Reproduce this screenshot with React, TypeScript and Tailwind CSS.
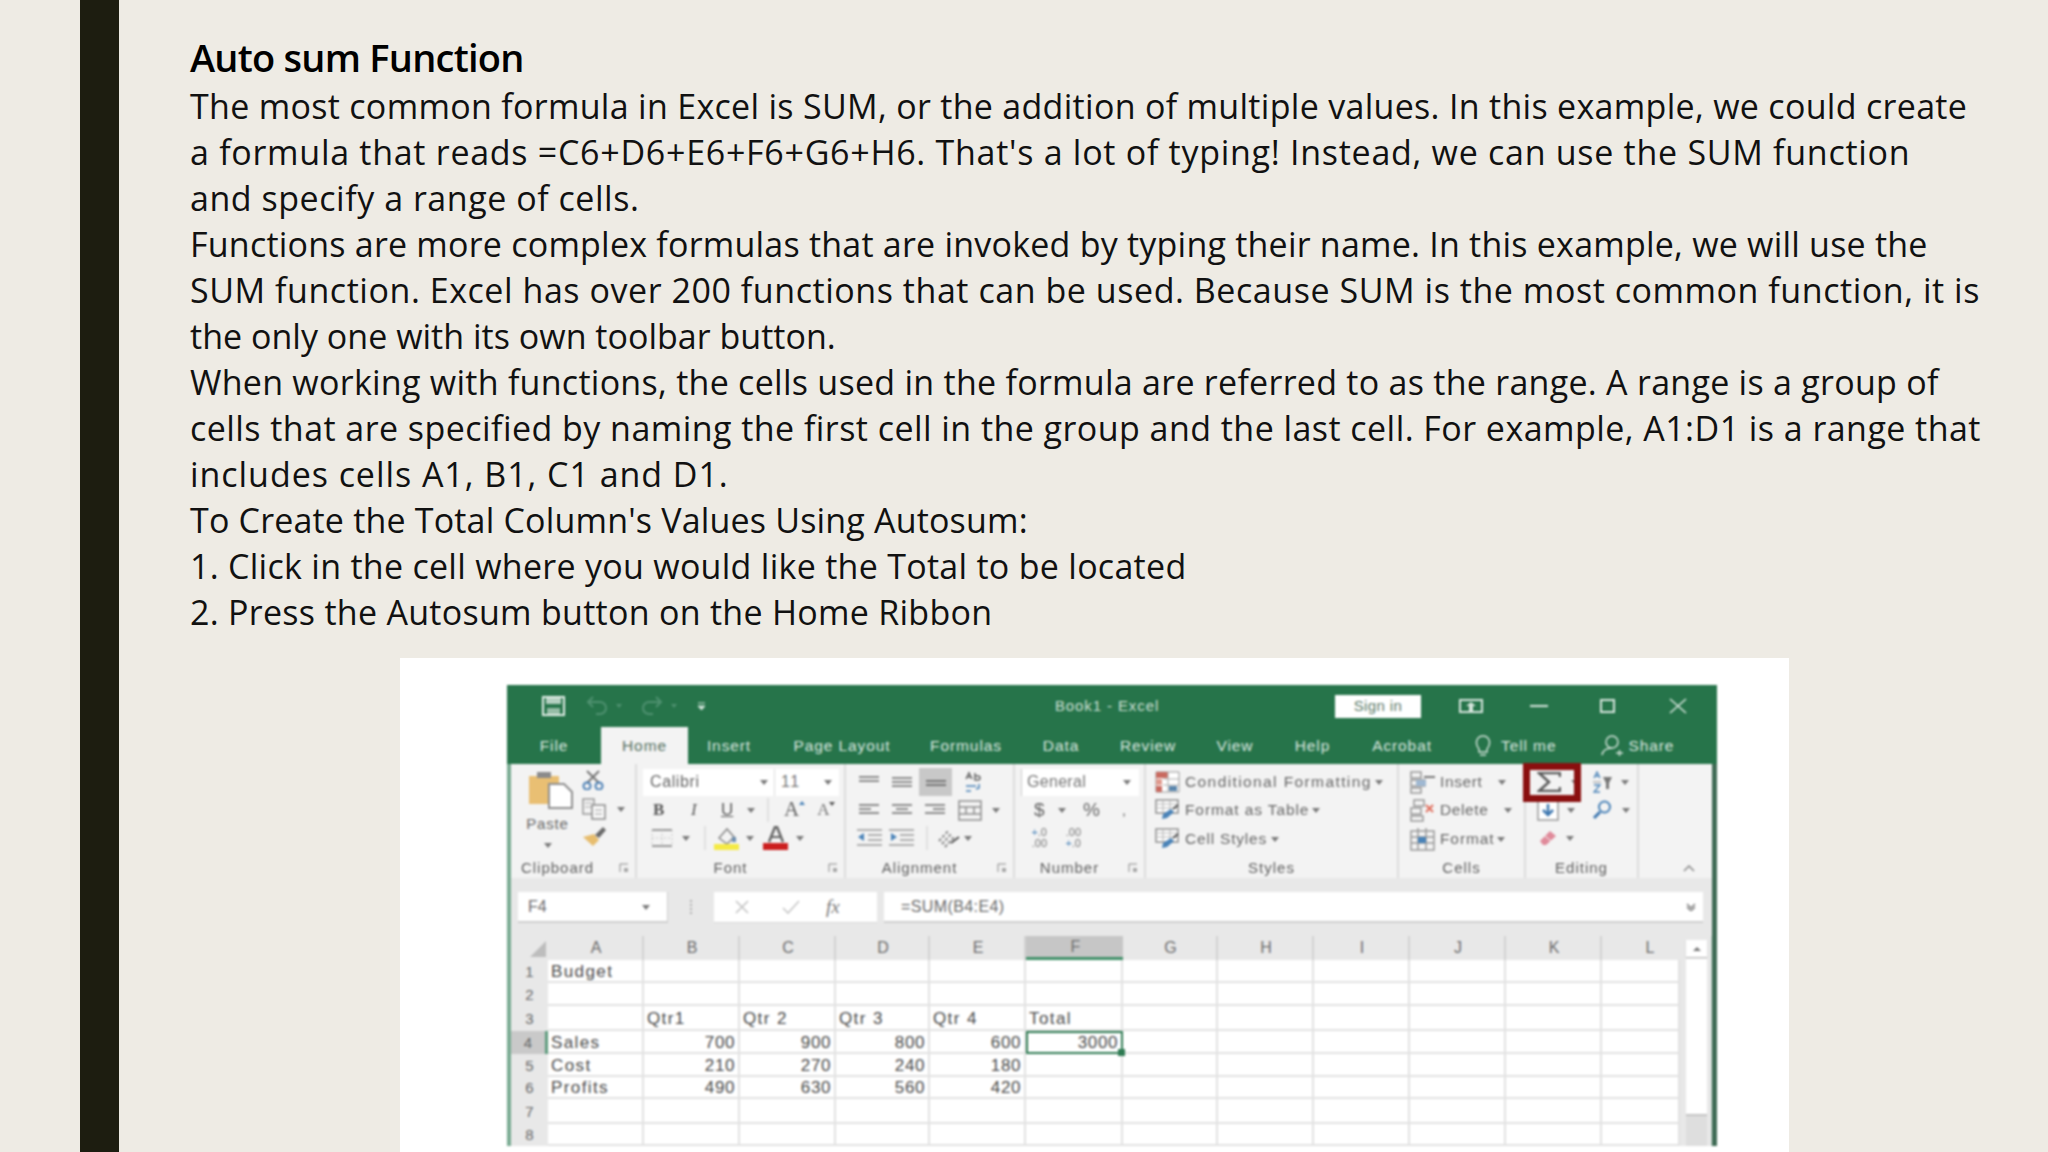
import React from "react";

const bodyLines = [
  { text: "The most common formula in Excel is SUM, or the addition of multiple values. In this example, we could create", cls: "tracking-[0.3px]" },
  { text: "a formula that reads =C6+D6+E6+F6+G6+H6. That's a lot of typing! Instead, we can use the SUM function", cls: "tracking-[0.72px]" },
  { text: "and specify a range of cells.", cls: "tracking-[0.54px]" },
  { text: "Functions are more complex formulas that are invoked by typing their name. In this example, we will use the", cls: "tracking-[0.22px]" },
  { text: "SUM function. Excel has over 200 functions that can be used. Because SUM is the most common function, it is", cls: "tracking-[0.55px]" },
  { text: "the only one with its own toolbar button.", cls: "tracking-[0.02px]" },
  { text: "When working with functions, the cells used in the formula are referred to as the range. A range is a group of", cls: "tracking-[0.27px]" },
  { text: "cells that are specified by naming the first cell in the group and the last cell. For example, A1:D1 is a range that", cls: "tracking-[0.45px]" },
  { text: "includes cells A1, B1, C1 and D1.", cls: "tracking-[0.95px]" },
  { text: "To Create the Total Column's Values Using Autosum:", cls: "tracking-[0.18px]" },
  { text: "1. Click in the cell where you would like the Total to be located", cls: "tracking-[0.28px]" },
  { text: "2. Press the Autosum button on the Home Ribbon", cls: "tracking-[0.28px]" },
];

const tabs = [
  { label: "File", cls: "w-[80px] ml-[7px]" },
  { label: "Insert", cls: "w-[82px] ml-[94px]" },
  { label: "Page Layout", cls: "w-[144px]" },
  { label: "Formulas", cls: "w-[104px]" },
  { label: "Data", cls: "w-[86px]" },
  { label: "Review", cls: "w-[88px]" },
  { label: "View", cls: "w-[86px]" },
  { label: "Help", cls: "w-[69px]" },
  { label: "Acrobat", cls: "w-[110px]" },
];

const columns = ["A", "B", "C", "D", "E", "F", "G", "H", "I", "J", "K", "L"];

const rows: string[][] = [
  ["Budget"],
  [],
  ["", "Qtr1", "Qtr 2", "Qtr 3", "Qtr 4", "Total"],
  ["Sales", "700", "900", "800", "600", "3000"],
  ["Cost", "210", "270", "240", "180"],
  ["Profits", "490", "630", "560", "420"],
  [],
  [],
];

function Caret({ className = "" }: { className?: string }) {
  return (
    <svg width="8" height="5" viewBox="0 0 8 5" className={className}>
      <path d="M0 0h8L4 5z" fill="#7a7a7a" />
    </svg>
  );
}

function Lines({ d, w = 22, h = 14, color = "#8c8c8c" }: { d: string; w?: number; h?: number; color?: string }) {
  return (
    <svg width={w} height={h} viewBox={`0 0 ${w} ${h}`}>
      <path d={d} stroke={color} strokeWidth="2" fill="none" />
    </svg>
  );
}

function Launcher({ className = "" }: { className?: string }) {
  return (
    <svg width="10" height="10" viewBox="0 0 10 10" className={className}>
      <path d="M1 9V1h8" stroke="#8a8a8a" fill="none" />
      <path d="M5 5h4v4H5z" fill="#a8a8a8" />
    </svg>
  );
}

function Group({
  label,
  width,
  launcher,
  labelCls = "",
  children,
}: {
  label: string;
  width: string;
  launcher?: boolean;
  labelCls?: string;
  children: React.ReactNode;
}) {
  return (
    <div className={`flex h-full flex-col border-r-2 border-[#dcdcdc] ${width}`}>
      <div className="flex h-[94px] flex-col pt-[3px]">{children}</div>
      <div className={`flex h-[20px] items-center justify-center text-[15px] tracking-[1px] text-[#5f5f5f] ${labelCls}`}>
        <span>{label}</span>
      </div>
      {launcher && (
        <div className="relative">
          <Launcher className="absolute bottom-[5px] right-[6px]" />
        </div>
      )}
    </div>
  );
}

function Row({ children, className = "" }: { children: React.ReactNode; className?: string }) {
  return <div className={`flex h-[28px] shrink-0 items-center ${className}`}>{children}</div>;
}

function TableIcon({ accent = "#4a83b8" }: { accent?: string }) {
  return (
    <svg width="25" height="24" viewBox="0 0 25 24">
      <path d="M1 2h22v13H1z" fill="#fff" stroke="#8f8f8f" strokeWidth="1.5" />
      <path d="M1 6h22M1 10h22M8 2v13M15 2v13" stroke="#b5b5b5" />
      <path d="M8 16l8-5 3 3-7 6-5 1z" fill={accent} />
      <path d="M18 11l5-4" stroke="#555" strokeWidth="2" />
    </svg>
  );
}

function RibbonTop() {
  return (
    <>
      <div className="flex h-[42px] shrink-0 items-center bg-[#26744a] text-white">
        <svg width="23" height="20" viewBox="0 0 23 20" className="ml-[35px]">
          <path d="M1 1h21v18H1z" fill="none" stroke="#e4efe9" strokeWidth="2" />
          <path d="M4 2h15v6H4z" fill="#e4efe9" opacity="0.75" />
          <path d="M5 12h13v7H5z" fill="#dfece5" opacity="0.6" />
        </svg>
        <svg width="24" height="20" viewBox="0 0 24 20" className="ml-[21px]">
          <path d="M7 1L2 6l5 5M2 6h12a6 6 0 0 1 0 12h-4" fill="none" stroke="#4f9170" strokeWidth="2" />
        </svg>
        <svg width="6" height="4" viewBox="0 0 6 4" className="ml-[6px]">
          <path d="M0 0h6L3 4z" fill="#4f9170" />
        </svg>
        <svg width="24" height="20" viewBox="0 0 24 20" className="ml-[17px]">
          <path d="M17 1l5 5-5 5M22 6H10a6 6 0 0 0 0 12h4" fill="none" stroke="#4f9170" strokeWidth="2" />
        </svg>
        <svg width="6" height="4" viewBox="0 0 6 4" className="ml-[8px]">
          <path d="M0 0h6L3 4z" fill="#4f9170" />
        </svg>
        <svg width="9" height="9" viewBox="0 0 9 9" className="ml-[20px]">
          <path d="M1 1h7M1 4h7l-3.500 4z" stroke="#cfe2d8" fill="#cfe2d8" />
        </svg>
        <span className="ml-[343px] w-[116px] whitespace-nowrap text-center text-[15px] tracking-[0.9px] text-[#cfe0d6]">Book1 - Excel</span>
        <span className="ml-[170px] flex h-[23px] w-[86px] items-center justify-center bg-white text-[15px] tracking-[0.4px] text-[#5b7a69]">
          Sign in
        </span>
        <svg width="24" height="14" viewBox="0 0 24 14" className="ml-[38px]">
          <path d="M1 1h22v12H1z" fill="none" stroke="#d7e6dd" strokeWidth="2" />
          <path d="M12 3l5 4h-3v5h-4V7H7z" fill="#d7e6dd" />
        </svg>
        <svg width="18" height="2" viewBox="0 0 18 2" className="ml-[47px]">
          <path d="M0 1h18" stroke="#d7e6dd" strokeWidth="2" />
        </svg>
        <svg width="15" height="14" viewBox="0 0 15 14" className="ml-[52px]">
          <path d="M1 1h13v12H1z" fill="none" stroke="#d7e6dd" strokeWidth="2" />
        </svg>
        <svg width="18" height="16" viewBox="0 0 18 16" className="ml-[54px]">
          <path d="M1 1l16 14M17 1L1 15" stroke="#d7e6dd" strokeWidth="1.6" />
        </svg>
      </div>
      <div className="relative flex h-[37px] shrink-0 items-center bg-[#26744a] text-[15.500px] tracking-[0.9px] text-[#dbe8e0]">
        {tabs.map((tab) => (
          <span key={tab.label} className={`text-center ${tab.cls}`}>
            {tab.label}
          </span>
        ))}
        <span className="absolute bottom-0 left-[94px] flex h-[37px] w-[87px] items-center justify-center bg-[#f3f3f3] text-[#54705f]">
          Home
        </span>
        <svg width="16" height="24" viewBox="0 0 16 24" className="ml-[18px]">
          <path d="M4 15c-5-6-2-13 4-13s9 7 4 13v3H4zM5 21h6" fill="none" stroke="#cfe0d6" strokeWidth="1.5" />
        </svg>
        <span className="ml-[10px]">Tell me</span>
        <svg width="24" height="24" viewBox="0 0 24 24" className="ml-[44px]">
          <circle cx="12" cy="8" r="6" fill="none" stroke="#cfe0d6" strokeWidth="1.5" />
          <path d="M2 21c1-5 5-7 10-7M16 19h7M19.500 16v6" fill="none" stroke="#cfe0d6" strokeWidth="1.5" />
        </svg>
        <span className="ml-[4px]">Share</span>
      </div>
    </>
  );
}

function Ribbon() {
  return (
    <div className="flex h-[114px] shrink-0 items-stretch bg-[#f3f3f3]">
      <Group label="Clipboard" width="w-[126px]" launcher labelCls="pr-[31px]">
        <div className="flex h-full">
          <div className="ml-[9px] flex w-[55px] flex-col items-center">
            <svg width="46" height="40" viewBox="0 0 46 40" className="ml-[6px] mt-[3px]">
              <path d="M1 6h30v28H1z" fill="#e9bf73" />
              <path d="M9 2h14v6H9z" fill="#8b8b8b" />
              <path d="M21 14h15l8 8v16H21z" fill="#fff" stroke="#8f8f8f" strokeWidth="2" />
            </svg>
            <span className="mt-[3px] text-[15px] tracking-[0.8px] text-[#666]">Paste</span>
            <Caret className="mt-[7px]" />
          </div>
          <div className="ml-[7px] flex flex-col">
            <svg width="22" height="20" viewBox="0 0 22 20" className="mt-[3px]">
              <path d="M5 1l12 12M17 1L5 13" stroke="#777" strokeWidth="2" />
              <circle cx="5" cy="16" r="3.500" fill="none" stroke="#4a7fb5" strokeWidth="2" />
              <circle cx="17" cy="16" r="3.500" fill="none" stroke="#4a7fb5" strokeWidth="2" />
            </svg>
            <div className="mt-[8px] flex items-center">
              <svg width="24" height="22" viewBox="0 0 24 22">
                <path d="M1 1h11v15H1z" fill="none" stroke="#999" strokeWidth="1.500" />
                <path d="M3 5h7M3 9h7" stroke="#aaa" />
                <path d="M10 7h13v14H10z" fill="#fafafa" stroke="#8c8c8c" strokeWidth="1.500" />
                <path d="M13 12h7M13 16h7" stroke="#999" />
              </svg>
              <Caret className="ml-[11px]" />
            </div>
            <svg width="26" height="21" viewBox="0 0 26 21" className="mt-[6px]">
              <path d="M1 11l11-3 5 6-6 6z" fill="#e7bd6e" />
              <path d="M13 9l8-8 3 3-7 8z" fill="#6a6a6a" />
            </svg>
          </div>
        </div>
      </Group>

      <Group label="Font" width="w-[209px]" launcher labelCls="pr-[20px]">
        <Row className="mt-[1px]">
          <div className="ml-[6px] flex h-[27px] w-[132px] items-center justify-between border-r border-[#ddd] bg-white pl-[7px] pr-[6px] text-[16px] tracking-[0.6px] text-[#666]">
            <span>Calibri</span>
            <Caret />
          </div>
          <div className="flex h-[27px] w-[64px] items-center justify-between bg-white pl-[6px] pr-[7px] text-[16px] tracking-[1.500px] text-[#777]">
            <span>11</span>
            <Caret />
          </div>
        </Row>
        <Row className="text-[17px] text-[#5a5a5a]">
          <b className="ml-[16px] w-[12px] font-['Liberation_Serif']">B</b>
          <i className="ml-[26px] w-[8px] font-['Liberation_Serif']">I</i>
          <span className="ml-[22px] w-[13px] underline">U</span>
          <Caret className="ml-[13px]" />
          <span className="ml-[12px] h-[24px] w-[2px] bg-[#e0e0e0]" />
          <span className="ml-[15px] text-[21px] font-['Liberation_Serif'] text-[#666]">A</span>
          <svg width="6" height="4" viewBox="0 0 6 4" className="mb-[14px]">
            <path d="M0 4l3-4 3 4z" fill="#4a83b8" />
          </svg>
          <span className="ml-[12px] text-[17px] font-['Liberation_Serif'] text-[#777]">A</span>
          <svg width="6" height="4" viewBox="0 0 6 4" className="mb-[12px]">
            <path d="M0 0h6L3 4z" fill="#555" />
          </svg>
        </Row>
        <Row>
          <svg width="22" height="20" viewBox="0 0 22 20" className="ml-[14px]">
            <path d="M1 2h20M1 18h20" stroke="#9a9a9a" strokeWidth="2" />
            <path d="M1 10h20M1 2v16M11 2v16M21 2v16" stroke="#c8c8c8" strokeDasharray="2 2" />
          </svg>
          <Caret className="ml-[9px]" />
          <span className="ml-[14px] h-[24px] w-[2px] bg-[#e0e0e0]" />
          <svg width="25" height="24" viewBox="0 0 25 24" className="ml-[8px]">
            <path d="M5 12l8-9 7 8-7 7z" fill="none" stroke="#8a8a8a" strokeWidth="1.500" />
            <path d="M18 11h4v5h-4z" fill="#6e8fb0" />
            <path d="M0 18h25v6H0z" fill="#f5ea45" />
          </svg>
          <Caret className="ml-[7px]" />
          <svg width="25" height="24" viewBox="0 0 25 24" className="ml-[9px]">
            <path d="M6 16L12 1h2l6 15" fill="none" stroke="#666" strokeWidth="2.500" />
            <path d="M8 11h10" stroke="#666" strokeWidth="2" />
            <path d="M0 17h25v7H0z" fill="#cc1f1f" />
          </svg>
          <Caret className="ml-[8px]" />
        </Row>
      </Group>

      <Group label="Alignment" width="w-[169px]" launcher labelCls="pr-[20px]">
        <Row className="mt-[1px]">
          <span className="ml-[13px]"><Lines d="M0 2h20M0 6h20" /></span>
          <span className="ml-[11px]"><Lines d="M0 3h20M0 7h20M0 11h20" /></span>
          <span className="ml-[5px] flex h-[28px] w-[33px] items-center justify-center bg-[#c8c8c8]">
            <Lines w={20} h={10} d="M0 4h20M0 8h20" color="#777" />
          </span>
          <svg width="18" height="22" viewBox="0 0 18 22" className="ml-[13px]">
            <path d="M1 8l3-6 3 6M2 6h4M10 2v7h3a2 2 0 0 0 0-4h-3" fill="none" stroke="#666" strokeWidth="1.500" />
            <path d="M1 15h10M14 13v4l-3 1M1 20h5" fill="none" stroke="#4a83b8" strokeWidth="1.500" />
          </svg>
        </Row>
        <Row>
          <span className="ml-[13px]"><Lines d="M0 2h20M0 6h12M0 10h20" /></span>
          <span className="ml-[11px]"><Lines d="M0 2h20M4 6h12M0 10h20" /></span>
          <span className="ml-[11px]"><Lines d="M0 2h20M8 6h12M0 10h20" /></span>
          <svg width="24" height="21" viewBox="0 0 24 21" className="ml-[11px]">
            <path d="M1 1h22v19H1zM1 7h22M1 14h22M8 7v7M16 7v7" fill="none" stroke="#8f8f8f" strokeWidth="1.500" />
          </svg>
          <Caret className="ml-[10px]" />
        </Row>
        <Row>
          <svg width="25" height="18" viewBox="0 0 25 18" className="ml-[11px]">
            <path d="M0 1h25M11 6h14M11 11h14M0 16h25" stroke="#9a9a9a" strokeWidth="1.600" />
            <path d="M1 8l6-4v8z" fill="#4a83b8" />
          </svg>
          <svg width="25" height="18" viewBox="0 0 25 18" className="ml-[7px]">
            <path d="M0 1h25M11 6h14M11 11h14M0 16h25" stroke="#9a9a9a" strokeWidth="1.600" />
            <path d="M8 8L2 4v8z" fill="#4a83b8" />
          </svg>
          <span className="ml-[12px] h-[24px] w-[2px] bg-[#e0e0e0]" />
          <svg width="24" height="22" viewBox="0 0 24 22" className="ml-[9px]">
            <path d="M2 14L12 3M5 17L15 6M8 20l10-11" stroke="#8a8a8a" strokeWidth="2" strokeDasharray="3 2" />
            <path d="M14 16l8-6" stroke="#555" strokeWidth="2" />
          </svg>
          <Caret className="ml-[3px]" />
        </Row>
      </Group>

      <Group label="Number" width="w-[131px]" launcher labelCls="pr-[20px]">
        <Row className="mt-[1px]">
          <div className="ml-[6px] flex h-[27px] w-[118px] items-center justify-between border-l border-[#ccc] bg-white pl-[5px] pr-[8px] text-[16px] tracking-[0.3px] text-[#777]">
            <span>General</span>
            <Caret />
          </div>
        </Row>
        <Row className="text-[19px] text-[#666]">
          <span className="ml-[19px] w-[14px]">$</span>
          <Caret className="ml-[10px]" />
          <span className="ml-[17px]">%</span>
          <span className="ml-[22px] text-[14px]">,</span>
        </Row>
        <Row className="text-[11px] leading-[11px] text-[#777]">
          <span className="ml-[10px] w-[22px] text-right">
            <span className="text-[#4a83b8]">+</span>.0
            <br />
            .00
          </span>
          <span className="ml-[12px] w-[22px] text-right">
            .00
            <br />
            <span className="text-[#4a83b8]">+</span>.0
          </span>
        </Row>
      </Group>

      <Group label="Styles" width="w-[253px]">
        <Row className="mt-[1px] text-[15.500px] tracking-[1.400px] text-[#666]">
          <svg width="25" height="22" viewBox="0 0 25 22" className="ml-[9px]">
            <path d="M1 1h23v20H1z" fill="#fff" stroke="#999" />
            <path d="M1 1h12v6H1z" fill="#c96a60" />
            <path d="M1 8h6v6H1z" fill="#e09a8e" />
            <path d="M1 15h6v6H1z" fill="#c96a60" />
            <path d="M8 8h16M8 14h16M13 1v20" stroke="#aaa" />
            <path d="M14 15h8v5h-8z" fill="#5a86ad" />
          </svg>
          <span className="ml-[5px]">Conditional Formatting</span>
          <Caret className="ml-[3px]" />
        </Row>
        <Row className="text-[15.500px] tracking-[0.9px] text-[#666]">
          <span className="ml-[9px] flex"><TableIcon /></span>
          <span className="ml-[5px]">Format as Table</span>
          <Caret className="ml-[3px]" />
        </Row>
        <Row className="mt-[1px] text-[15.500px] tracking-[0.8px] text-[#666]">
          <span className="ml-[9px] flex"><TableIcon /></span>
          <span className="ml-[5px]">Cell Styles</span>
          <Caret className="ml-[4px]" />
        </Row>
      </Group>

      <Group label="Cells" width="w-[127px]">
        <Row className="mt-[1px] text-[15.500px] tracking-[0.6px] text-[#666]">
          <svg width="25" height="23" viewBox="0 0 25 23" className="ml-[11px]">
            <path d="M1 1h10v6H1zM1 9h14v6H1zM1 17h10v5H1z" fill="none" stroke="#999" strokeWidth="1.500" />
            <path d="M6 9h10v6H6z" fill="#9fb8d2" />
            <path d="M14 6h11" stroke="#777" strokeWidth="2" />
          </svg>
          <span className="ml-[5px] w-[50px]">Insert</span>
          <Caret className="ml-[8px]" />
        </Row>
        <Row className="text-[15.500px] tracking-[0.6px] text-[#666]">
          <svg width="25" height="23" viewBox="0 0 25 23" className="ml-[11px]">
            <path d="M4 1h10v6H4zM1 9h10v6H1zM1 17h12v5H1z" fill="none" stroke="#999" strokeWidth="1.500" />
            <path d="M16 6l7 7M23 6l-7 7" stroke="#e0705f" strokeWidth="2" />
          </svg>
          <span className="ml-[5px] w-[50px]">Delete</span>
          <Caret className="ml-[14px]" />
        </Row>
        <Row className="mt-[1px] text-[15.500px] tracking-[0.9px] text-[#666]">
          <svg width="25" height="24" viewBox="0 0 25 24" className="ml-[11px]">
            <path d="M1 4h23v19H1zM1 10h23M1 16h23M8 1v22M16 1v22" fill="none" stroke="#999" strokeWidth="1.500" />
            <path d="M8 10h8v6H8z" fill="#4a83b8" />
          </svg>
          <span className="ml-[5px]">Format</span>
          <Caret className="ml-[2px]" />
        </Row>
      </Group>

      <Group label="Editing" width="w-[113px]">
        <Row className="relative mt-[1px]">
          <span className="absolute left-[-3px] top-[-5px] h-[39px] w-[58px] border-[7px] border-[#8a0f0f]" />
          <svg width="24" height="20" viewBox="0 0 24 20" className="ml-[11px]">
            <path d="M23 5V1H2l10 9L2 19h21v-4" fill="none" stroke="#5c5c5c" strokeWidth="2.500" />
          </svg>
          <Caret className="ml-[10px]" />
          <svg width="20" height="22" viewBox="0 0 20 22" className="ml-[14px]">
            <path d="M1 7l3-6 3 6M2 5h4" fill="none" stroke="#4a83b8" strokeWidth="1.300" />
            <path d="M0 11h8" stroke="#aaa" strokeWidth="1.300" />
            <path d="M1 14h6l-6 7h6" fill="none" stroke="#4a83b8" strokeWidth="1.300" />
            <path d="M10 6h9l-3 6v6h-3v-6z" fill="#777" />
          </svg>
          <Caret className="ml-[8px]" />
        </Row>
        <Row>
          <svg width="22" height="21" viewBox="0 0 22 21" className="ml-[11px]">
            <path d="M1 1h20v19H1z" fill="#fff" stroke="#999" strokeWidth="1.500" />
            <path d="M11 4v11M6 10l5 5 5-5" fill="none" stroke="#3f78b0" strokeWidth="2.500" />
          </svg>
          <Caret className="ml-[8px]" />
          <svg width="20" height="20" viewBox="0 0 20 20" className="ml-[17px]">
            <circle cx="12.500" cy="7" r="5.500" fill="none" stroke="#4a83b8" strokeWidth="2" />
            <path d="M8 12l-6 6" stroke="#3f78b0" strokeWidth="3" />
          </svg>
          <Caret className="ml-[10px]" />
        </Row>
        <Row>
          <svg width="18" height="16" viewBox="0 0 18 16" className="ml-[13px]">
            <path d="M1 11l10-10 6 5L7 15H4z" fill="#e08a9a" />
            <path d="M6 6l6 5" stroke="#f3f3f3" />
          </svg>
          <Caret className="ml-[9px]" />
        </Row>
      </Group>

      <div className="flex flex-1 flex-col items-end justify-end pb-[6px] pr-[17px]">
        <svg width="12" height="7" viewBox="0 0 12 7">
          <path d="M1 6l5-5 5 5" fill="none" stroke="#8a8a8a" strokeWidth="1.500" />
        </svg>
      </div>
    </div>
  );
}

function FormulaBar() {
  return (
    <div className="flex h-[58px] shrink-0 items-start bg-[#e8e8e8] pl-[7px] pr-[9px] pt-[14px] text-[16px] text-[#6a6a6a]">
      <div className="flex h-[31px] w-[150px] items-center justify-between border-b-2 border-r border-[#cfcfcf] bg-white pl-[10px] pr-[17px] pt-[1px]">
        <span>F4</span>
        <Caret />
      </div>
      <span className="ml-[22px] mt-[8px] h-[14px] w-[2px] border-l-2 border-dotted border-[#b0b0b0]" />
      <div className="ml-[22px] flex h-[31px] w-[163px] items-center border-b border-[#d8d8d8] bg-white">
        <svg width="16" height="16" viewBox="0 0 16 16" className="ml-[20px]">
          <path d="M2 2l12 12M14 2L2 14" stroke="#c4c4c4" strokeWidth="1.600" />
        </svg>
        <svg width="18" height="16" viewBox="0 0 18 16" className="ml-[32px]">
          <path d="M1 9l5 5L17 2" fill="none" stroke="#c8c8c8" strokeWidth="1.600" />
        </svg>
        <i className="ml-[26px] font-['Liberation_Serif'] text-[19px] text-[#777]">fx</i>
      </div>
      <div className="ml-[7px] flex h-[31px] flex-1 items-center justify-between border-b-2 border-[#cfcfcf] bg-white pl-[17px] pr-[7px] pt-[1px] tracking-[0.4px]">
        <span>=SUM(B4:E4)</span>
        <svg width="10" height="8" viewBox="0 0 10 8">
          <path d="M1 1l4 4 4-4M1 4l4 4 4-4" fill="none" stroke="#777" strokeWidth="1.300" />
        </svg>
      </div>
    </div>
  );
}

function Sheet() {
  return (
    <div className="flex min-h-0 flex-1 bg-[#e8e8e8]">
      <div className="grid w-[1169px] grid-cols-[37px_96px_96px_96px_94px_96px_97px_95px_96px_96px_96px_96px_78px] grid-rows-[24px_23px_23px_25px_23px_23px_22px_25px_22px] text-[#4a4a4a]">
        <div className="flex items-end justify-end pb-[3px] pr-[2px]">
          <svg width="16" height="16" viewBox="0 0 16 16">
            <path d="M16 0v16H0z" fill="#bdbdbd" />
          </svg>
        </div>
        {columns.map((col) => (
          <div
            key={col}
            className={
              col === "F"
                ? "flex items-center justify-center border-b-[3px] border-[#3f8f67] bg-[#c6c6c6] pl-[2px] text-[16px] text-[#6f6f6f]"
                : col === "L"
                  ? "flex items-center justify-center pl-[18px] text-[16px] text-[#6b6b6b]"
                  : "flex items-center justify-center border-r-2 border-[#d2d2d2] pl-[2px] text-[16px] text-[#6b6b6b]"
            }
          >
            {col}
          </div>
        ))}
        {rows.map((cells, r) => (
          <React.Fragment key={r}>
            <div
              className={
                r === 3
                  ? "flex items-center justify-center border-r-[3px] border-[#5f9c7e] bg-[#c9c9c9] pt-[1px] text-[15px] text-[#666]"
                  : "flex items-center justify-center pt-[1px] text-[15px] text-[#666]"
              }
            >
              {r + 1}
            </div>
            {columns.map((col, c) => {
              const value = cells[c];
              const isNumber = value !== undefined && /^\d+$/.test(value);
              const selected = r === 3 && col === "F";
              return (
                <div
                  key={col}
                  className={
                    selected
                      ? "relative flex items-center justify-end border-2 border-[#2e7a52] bg-white pr-[3px] text-[17px] tracking-[0.6px]"
                      : isNumber
                        ? "flex items-center justify-end border-b-2 border-r-2 border-[#e2e2e2] bg-white pr-[3px] pt-[2px] text-[17px] tracking-[0.6px]"
                        : "flex items-center whitespace-nowrap border-b-2 border-r-2 border-[#e2e2e2] bg-white pl-[3px] pt-[2px] text-[17px] tracking-[1.400px]"
                  }
                >
                  {value}
                  {selected && (
                    <span className="absolute bottom-[-4px] right-[-4px] h-[7px] w-[7px] bg-[#2e7a52]" />
                  )}
                </div>
              );
            })}
          </React.Fragment>
        ))}
      </div>
      <div className="ml-[6px] mt-[4px] flex w-[21px] flex-col">
        <div className="flex h-[17px] items-center justify-center bg-white shadow-[0_1px_1px_#bbb]">
          <svg width="8" height="4" viewBox="0 0 8 4">
            <path d="M0 4l4-4 4 4z" fill="#777" />
          </svg>
        </div>
        <div className="mt-[2px] h-[157px] border-b-2 border-[#c4c4c4] bg-white" />
        <div className="flex-1 bg-[#dedede]" />
      </div>
      <div className="ml-[4px] w-[1px] bg-[#c5d6cc]" />
    </div>
  );
}

function ExcelShot() {
  return (
    <div className="flex h-[461px] w-[1210px] flex-col overflow-hidden font-['Liberation_Sans',sans-serif] blur-[0.8px]">
      <RibbonTop />
      <div className="flex min-h-0 flex-1">
        <div className="w-[4px] bg-[#79ab92]" />
        <div className="flex w-[1201px] flex-col">
          <Ribbon />
          <FormulaBar />
          <Sheet />
        </div>
        <div className="w-[5px] bg-[#3f6b55]" />
      </div>
    </div>
  );
}

export default function App() {
  return (
    <div className="flex h-[1152px] w-[2048px] overflow-hidden bg-[#eeebe4] pl-[80px] font-['Open_Sans',sans-serif]">
      <div className="w-[39px] shrink-0 bg-[#1d1d10]" />
      <main className="flex-1 pl-[71px] pt-[34px]">
        <h1 className="mb-[3px] text-[38px] font-semibold leading-[46px] tracking-[-0.76px] text-black">Auto sum Function</h1>
        <div className="text-[34px] leading-[46px] text-[#111]">
          {bodyLines.map((line) => (
            <p key={line.text} className={`whitespace-nowrap ${line.cls}`}>
              {line.text}
            </p>
          ))}
        </div>
        <div className="ml-[210px] mt-[23px] h-[494px] w-[1389px] bg-white pl-[107px] pt-[27px]">
          <ExcelShot />
        </div>
      </main>
    </div>
  );
}
